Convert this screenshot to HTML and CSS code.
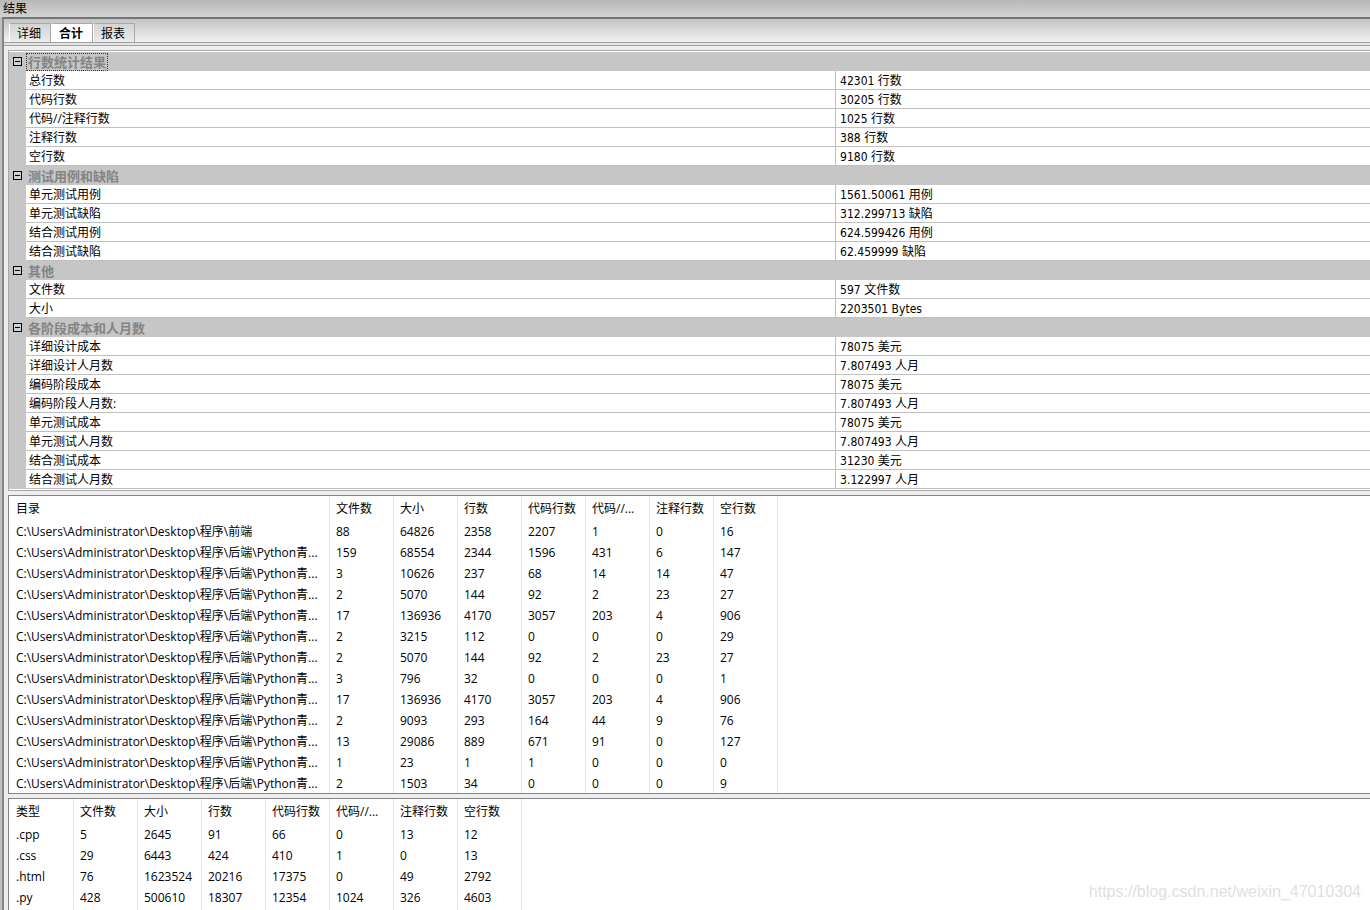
FILE: index.html
```html
<!DOCTYPE html>
<html lang="zh-CN">
<head>
<meta charset="utf-8">
<title>结果</title>
<link rel="stylesheet" href="styles.css">
</head>
<body>
<header class="titlebar">结果</header>
<main class="window">
  <nav class="tabs">
    <button class="tab" type="button">详细</button>
    <button class="tab tab-active" type="button">合计</button>
    <button class="tab" type="button">报表</button>
  </nav>
  <div class="rail"></div>
  <div class="panels">
    <section class="panel summary-panel">
      <table class="summary">
        <colgroup><col class="col-gutter"><col class="col-name"><col></colgroup>
        <tbody id="summary"></tbody>
      </table>
    </section>
    <section class="panel">
      <table class="list list-folders" id="folders"></table>
    </section>
    <section class="panel panel-last">
      <table class="list list-types" id="types"></table>
    </section>
  </div>
</main>
<div class="watermark">https://blog.csdn.net/weixin_47010304</div>
<script src="app.js"></script>
</body>
</html>
```
FILE: styles.css
```css
* {
  box-sizing: border-box;
}

body {
  margin: 0;
  height: 100vh;
  overflow: hidden;
  display: flex;
  flex-direction: column;
  background: #c0c0c0;
  color: #000;
  font: 12px/18px "Open Sans", "Noto Sans CJK SC", sans-serif;
}

button {
  font: inherit;
  color: inherit;
  padding: 0;
  margin: 0;
}

.titlebar {
  flex: none;
  padding: 0 3px;
  line-height: 17px;
  background: linear-gradient(#b8b8b8, #d2d2d2);
}

.window {
  flex: 1;
  min-height: 0;
  margin-left: 2px;
  display: flex;
  flex-direction: column;
  border-top: 2px solid #747474;
  border-left: 2px solid #858585;
  background: #eee;
}

.tabs {
  flex: none;
  display: flex;
  padding: 4px 5px 0;
  background: linear-gradient(#c4c4c4, #f2f2f2);
  border-bottom: 1px solid #a0a0a0;
}

.tab {
  width: 42px;
  height: 19px;
  padding: 1px 2px 0 0;
  line-height: 17px;
  border: 1px solid #a8a8a8;
  border-left-color: #fff;
  border-bottom: 0;
  background: linear-gradient(#d4d4d4, #ebebeb);
}

.tab-active {
  background: #fff;
  font-weight: 700;
}

.rail {
  flex: none;
  height: 3px;
  background: #e4e4e4;
  border-bottom: 1px solid #a0a0a0;
}

.panels {
  flex: 1;
  min-height: 0;
  display: flex;
  flex-direction: column;
  gap: 4px;
  padding: 4px 0 0 4px;
}

.panel {
  flex: none;
  background: #fff;
  border: 1px solid #858585;
  border-right: 0;
}

.summary-panel {
  border-color: #a8a8a8;
  padding: 1px 0;
}

.panel-last {
  flex: 1;
  min-height: 0;
  overflow: hidden;
  border-bottom: 0;
}

table {
  border-collapse: separate;
  border-spacing: 0;
  table-layout: fixed;
}

td,
th {
  text-align: left;
  font-weight: 400;
  white-space: nowrap;
}

.summary {
  width: 100%;
}

.col-gutter {
  width: 17px;
}

.col-name {
  width: 59.45%;
}

.summary td,
.summary th {
  height: 19px;
  padding: 2px 4px 0;
  line-height: 16px;
  border-bottom: 1px solid #c0c0c0;
}

.summary th {
  padding-left: 3px;
}

.summary td {
  border-left: 1px solid #c0c0c0;
  font-family: "DejaVu Sans Condensed", "Noto Sans CJK SC", sans-serif;
}

.summary .gutter {
  padding: 0 4px;
  border: 0;
  background: #c6c6c6;
}

.summary .group {
  padding: 0 2px;
  border: 0;
  background: #c6c6c6;
  color: #848484;
  font-weight: 700;
  font-size: 13px;
}

.group-label {
  display: inline-block;
}

.group-focus {
  margin-left: -1px;
  outline: 1px dotted #333;
  padding: 0 1px;
}

.toggle {
  display: block;
  width: 9px;
  height: 9px;
  border: 1px solid #000;
  background: linear-gradient(#000, #000) center / 5px 1px no-repeat #d0d0d0;
}

.list-folders {
  width: 769px;
}

.list-types {
  width: 513px;
}

.list th,
.list td {
  height: 21px;
  padding: 2px 2px 0 6px;
  border-right: 1px solid #e4e4e4;
}

.list th {
  height: 24px;
}

.list th:first-child,
.list td:first-child {
  padding-left: 7px;
}

.col-path {
  width: 321px;
}

.col-type {
  width: 65px;
}

.col-count {
  width: 64px;
}

.watermark {
  position: absolute;
  right: 9px;
  bottom: 8px;
  color: #e0e0e0;
  font: 16px/20px "Liberation Sans", sans-serif;
}
```
FILE: app.js
```js
const groups = [
  ["行数统计结果", [["总行数", "42301 行数"], ["代码行数", "30205 行数"], ["代码//注释行数", "1025 行数"], ["注释行数", "388 行数"], ["空行数", "9180 行数"]]],
  ["测试用例和缺陷", [["单元测试用例", "1561.50061 用例"], ["单元测试缺陷", "312.299713 缺陷"], ["结合测试用例", "624.599426 用例"], ["结合测试缺陷", "62.459999 缺陷"]]],
  ["其他", [["文件数", "597 文件数"], ["大小", "2203501 Bytes"]]],
  ["各阶段成本和人月数", [["详细设计成本", "78075 美元"], ["详细设计人月数", "7.807493 人月"], ["编码阶段成本", "78075 美元"], ["编码阶段人月数:", "7.807493 人月"], ["单元测试成本", "78075 美元"], ["单元测试人月数", "7.807493 人月"], ["结合测试成本", "31230 美元"], ["结合测试人月数", "3.122997 人月"]]]
];

document.getElementById("summary").innerHTML = groups.map(([title, rows], i) =>
  `<tr><td class="gutter"><button class="toggle" type="button" aria-label="${title}"></button></td>` +
  `<th class="group" colspan="2"><span class="group-label${i ? "" : " group-focus"}">${title}</span></th></tr>` +
  rows.map(([name, value]) => `<tr><td class="gutter"></td><th scope="row">${name}</th><td>${value}</td></tr>`).join("")
).join("");

const counts = ["文件数", "大小", "行数", "代码行数", "代码//...", "注释行数", "空行数"];
const desktop = "C:\\Users\\Administrator\\Desktop\\程序\\";
const back = desktop + "后端\\Python青...";

const folders = [
  [desktop + "前端", 88, 64826, 2358, 2207, 1, 0, 16],
  [back, 159, 68554, 2344, 1596, 431, 6, 147],
  [back, 3, 10626, 237, 68, 14, 14, 47],
  [back, 2, 5070, 144, 92, 2, 23, 27],
  [back, 17, 136936, 4170, 3057, 203, 4, 906],
  [back, 2, 3215, 112, 0, 0, 0, 29],
  [back, 2, 5070, 144, 92, 2, 23, 27],
  [back, 3, 796, 32, 0, 0, 0, 1],
  [back, 17, 136936, 4170, 3057, 203, 4, 906],
  [back, 2, 9093, 293, 164, 44, 9, 76],
  [back, 13, 29086, 889, 671, 91, 0, 127],
  [back, 1, 23, 1, 1, 0, 0, 0],
  [back, 2, 1503, 34, 0, 0, 0, 9]
];

const types = [
  [".cpp", 5, 2645, 91, 66, 0, 13, 12],
  [".css", 29, 6443, 424, 410, 1, 0, 13],
  [".html", 76, 1623524, 20216, 17375, 0, 49, 2792],
  [".py", 428, 500610, 18307, 12354, 1024, 326, 4603],
  ["", "", "", "", "", "", "", ""]
];

function fillList(id, firstTitle, firstClass, rows) {
  const table = document.getElementById(id);
  const titles = [firstTitle, ...counts];
  table.innerHTML =
    "<thead><tr>" + titles.map((t, i) => `<th scope="col" class="${i ? "col-count" : firstClass}">${t}</th>`).join("") + "</tr></thead>" +
    "<tbody>" + rows.map(r => "<tr>" + r.map(v => `<td>${v}</td>`).join("") + "</tr>").join("") + "</tbody>";
}

fillList("folders", "目录", "col-path", folders);
fillList("types", "类型", "col-type", types);
```
